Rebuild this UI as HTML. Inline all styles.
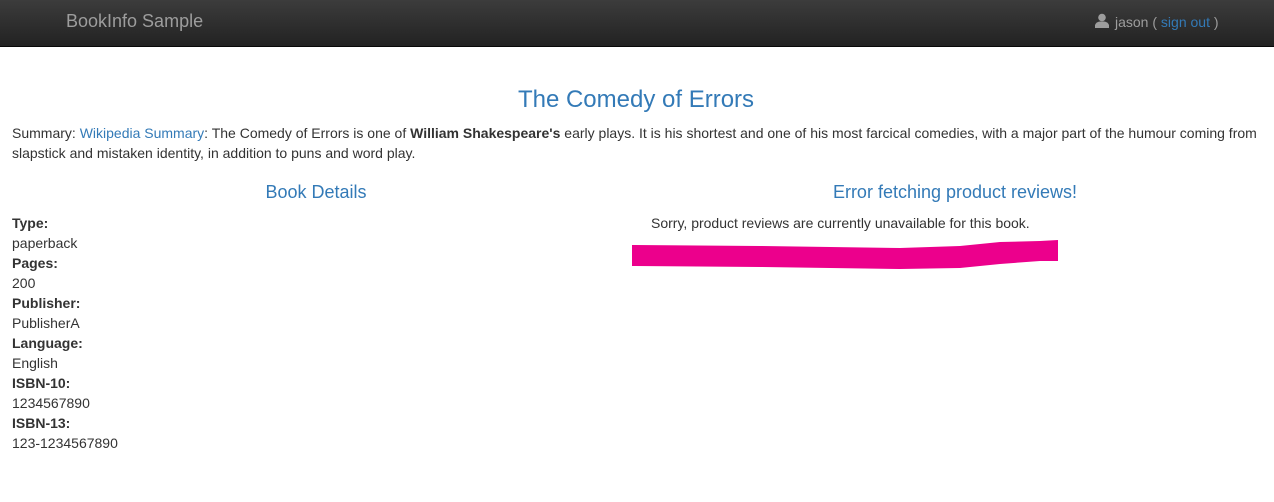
<!DOCTYPE html>
<html><head><style>
body{margin:0;font-family:"Liberation Sans",Arial,sans-serif;font-size:14px;line-height:20px;color:#333;background:#fff;width:1274px;height:502px;overflow:hidden;position:relative}
.nav{height:46px;background:linear-gradient(#3c3c3c,#222);border-bottom:1px solid #080808;position:relative}
.brand{position:absolute;left:66px;top:11px;font-size:18px;color:#9d9d9d;line-height:20px}
.user{position:absolute;left:1095px;top:12px;color:#9d9d9d;line-height:20px}
a{color:#337ab7;text-decoration:none}
h1{position:absolute;left:0;width:1272px;text-align:center;top:87px;margin:0;font-size:24px;font-weight:normal;color:#337ab7;line-height:26px}
.sum{position:absolute;left:12px;top:123px;width:1255px}
h3{margin:0;font-size:18px;font-weight:normal;color:#337ab7;position:absolute;top:181px;line-height:22px;text-align:center}
.det{position:absolute;left:12px;top:213px}
.rev{position:absolute;left:651px;top:213px}
</style></head><body>
<div class="nav"><div class="brand">BookInfo Sample</div>
<div class="user"><svg width="14" height="15" viewBox="0 0 14 15" style="vertical-align:-1px;margin-right:6px"><circle cx="7" cy="4.5" r="3.8" fill="#9d9d9d"/><path d="M0 15 L0 12 Q1 9 5 8.5 L9 8.5 Q13 9 14 12 L14 15Z" fill="#9d9d9d"/></svg>jason ( <a>sign out</a> )</div></div>
<h1>The Comedy of Errors</h1>
<div class="sum">Summary: <a>Wikipedia Summary</a>: The Comedy of Errors is one of <b>William Shakespeare's</b> early plays. It is his shortest and one of his most farcical comedies, with a major part of the humour coming from slapstick and mistaken identity, in addition to puns and word play.</div>
<h3 style="left:0;width:632px">Book Details</h3>
<h3 style="left:638px;width:634px">Error fetching product reviews!</h3>
<div class="det"><b>Type:</b><br>paperback<br><b>Pages:</b><br>200<br><b>Publisher:</b><br>PublisherA<br><b>Language:</b><br>English<br><b>ISBN-10:</b><br>1234567890<br><b>ISBN-13:</b><br>123-1234567890</div>
<div class="rev">Sorry, product reviews are currently unavailable for this book.</div>
<svg style="position:absolute;left:0;top:0" width="1274" height="502"><polygon points="632,245 760,246 900,248 960,246 1000,242 1040,241 1058,240 1058,261 1040,261 1000,264 960,268 900,269 760,267 632,266" fill="#ec008c"/></svg>
</body></html>
